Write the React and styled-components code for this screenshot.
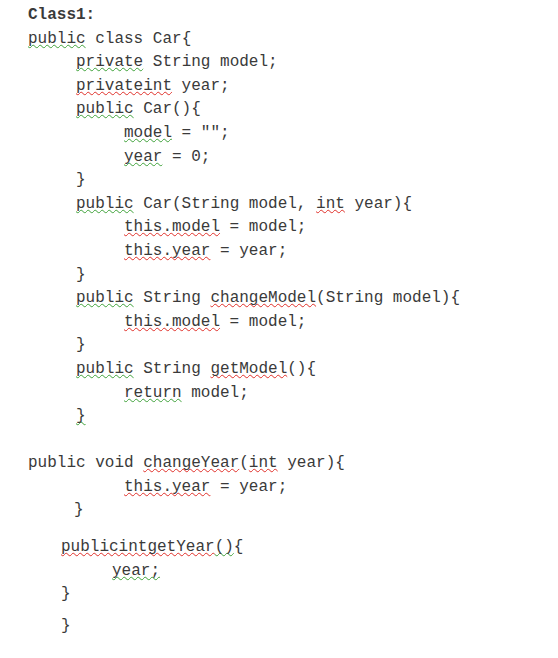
import React from 'react'
import styled, {createGlobalStyle} from 'styled-components'

const GlobalStyle = createGlobalStyle`
body {
    margin: 0;
    background: #ffffff;
}
`

const Page = styled.div`
width: 558px;
height: 658px;
padding-top: 4px;
box-sizing: border-box;
background: #ffffff;
color: #3a3a3a;
font-family: 'Liberation Mono', 'Courier New', monospace;
font-size: 16px;
line-height: 23.6px;
`

const Line = styled.div`
padding-left: ${p => p.$indent}px;
margin-top: ${p => p.$gap || 0}px;
height: 23.6px;
white-space: pre;
font-weight: ${p => p.$bold ? 700 : 400};
`

const Squiggle = styled.span`
text-decoration-line: underline;
text-decoration-style: wavy;
text-decoration-color: ${p => p.$tone === 'red' ? '#e0302a' : '#3fa23a'};
text-decoration-thickness: 1px;
text-underline-offset: 1px;
text-decoration-skip-ink: none;
`

const G = ({children}) => <Squiggle $tone='green'>{children}</Squiggle>
const R = ({children}) => <Squiggle $tone='red'>{children}</Squiggle>

export default function App() {
    return <>
        <GlobalStyle />
        <Page>
            <Line $indent={28} $bold>Class1:</Line>
            <Line $indent={28}><G>public</G> class Car{'{'}</Line>
            <Line $indent={76}><G>private</G> String model;</Line>
            <Line $indent={76}><R>privateint</R> year;</Line>
            <Line $indent={76}><G>public</G> Car(){'{'}</Line>
            <Line $indent={124}><G>model</G> = "";</Line>
            <Line $indent={124}><G>year</G> = 0;</Line>
            <Line $indent={76}>{'}'}</Line>
            <Line $indent={76}><G>public</G> Car(String model, <R>int</R> year){'{'}</Line>
            <Line $indent={124}><R>this.model</R> = model;</Line>
            <Line $indent={124}><R>this.year</R> = year;</Line>
            <Line $indent={76}>{'}'}</Line>
            <Line $indent={76}><G>public</G> String <R>changeModel</R>(String model){'{'}</Line>
            <Line $indent={124}><R>this.model</R> = model;</Line>
            <Line $indent={76}>{'}'}</Line>
            <Line $indent={76}><G>public</G> String <R>getModel</R>(){'{'}</Line>
            <Line $indent={124}><G>return</G> model;</Line>
            <Line $indent={76}><G>{'}'}</G></Line>
            <Line $indent={28} $gap={23.6}>public void <R>changeYear</R>(<R>int</R> year){'{'}</Line>
            <Line $indent={124}><R>this.year</R> = year;</Line>
            <Line $indent={74}>{'}'}</Line>
            <Line $indent={61} $gap={13}><R>publicintgetYear</R><G>()</G>{'{'}</Line>
            <Line $indent={112}><G>year;</G></Line>
            <Line $indent={61}>{'}'}</Line>
            <Line $indent={61} $gap={8}>{'}'}</Line>
        </Page>
    </>
}
